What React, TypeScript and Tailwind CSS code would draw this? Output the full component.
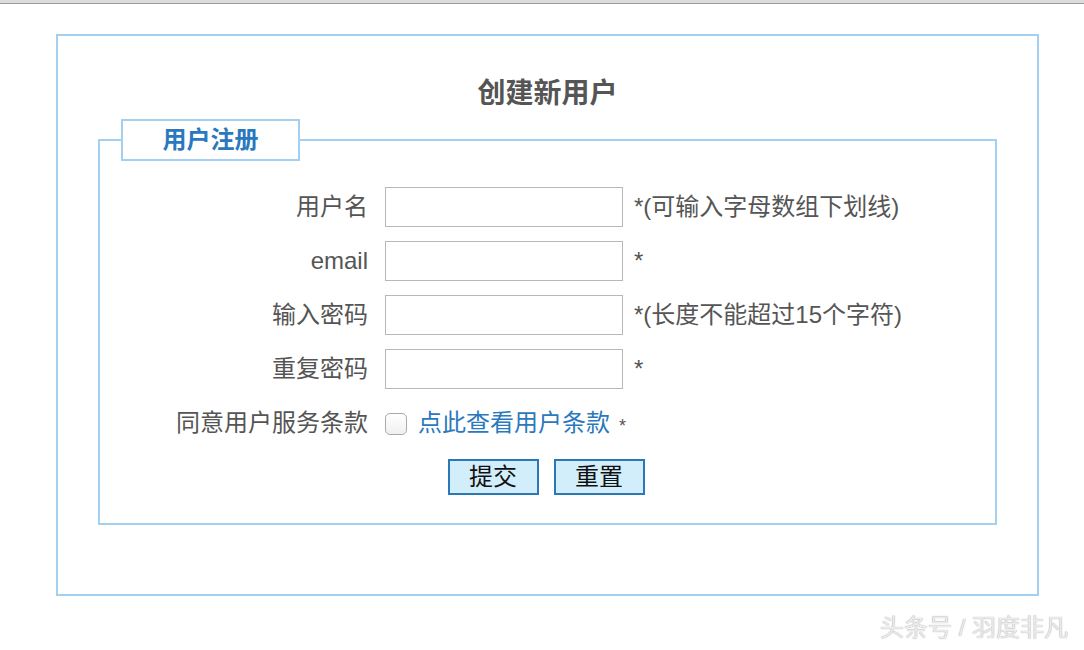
import React from 'react';

const FONT = "font-['Liberation_Sans','Noto_Sans_CJK_SC',sans-serif]";

const FIELDS = [
  { label: '用户名', type: 'text', hint: '*(可输入字母数组下划线)' },
  { label: 'email', type: 'text', hint: '*' },
  { label: '输入密码', type: 'password', hint: '*(长度不能超过15个字符)' },
  { label: '重复密码', type: 'password', hint: '*' },
];

function Row({ label, children }: { label: string; children: React.ReactNode }) {
  return (
    <div className="flex items-center h-[54px]">
      <div className="w-[268px] text-right text-[24px] leading-[30px] text-[#555]">{label}</div>
      <div className="ml-[17px] flex items-center">{children}</div>
    </div>
  );
}

export default function App() {
  return (
    <div className={`w-[1084px] h-[650px] bg-white overflow-hidden flex flex-col ${FONT}`}>
      <div className="h-[3px] bg-[#dcdcdc]" />
      <div className="h-px bg-[#9a9a9a]" />

      <div className="ml-[56px] mt-[30px] w-[983px] h-[562px] border-2 border-[#a3cff1] px-[40px]">
        <h2 className="pt-[38px] h-[83px] text-center text-[28px] leading-[40px] font-bold text-[#555]">
          创建新用户
        </h2>

        <fieldset className="border-2 border-[#a3cff1] p-0 m-0">
          <legend className="ml-[21px] w-[179px] h-[42px] border-2 border-[#a3cff1] text-left">
            <div className="text-center text-[24px] leading-[38px] font-bold text-[#2a78bd]">用户注册</div>
          </legend>

          <div className="pt-[19px] pb-[19px]">
            {FIELDS.map((f) => (
              <Row key={f.label} label={f.label}>
                <input
                  type={f.type}
                  className="w-[238px] h-[40px] border border-[#b8b8b8] bg-white outline-none"
                />
                <span className="ml-[11px] text-[24px] leading-[30px] text-[#555]">{f.hint}</span>
              </Row>
            ))}

            <Row label="同意用户服务条款">
              <span className="mt-[2px] w-[22px] h-[22px] rounded-[5px] border border-[#a9a9a9] bg-gradient-to-b from-white to-[#f0f0f0]" />
              <a className="ml-[11px] text-[24px] leading-[30px] text-[#2a78bd] cursor-pointer">点此查看用户条款</a>
              <span className="ml-[9px] mt-[6px] text-[18px] text-[#555]">*</span>
            </Row>

            <div className="flex items-center justify-center gap-[15px] h-[54px] pr-[3px]">
              <button className="w-[91px] h-[36px] border-2 border-[#2b78b6] bg-[#d3eefb] text-[24px] leading-[30px] text-[#111]">
                提交
              </button>
              <button className="w-[91px] h-[36px] border-2 border-[#2b78b6] bg-[#d3eefb] text-[24px] leading-[30px] text-[#111]">
                重置
              </button>
            </div>
          </div>
        </fieldset>
      </div>

      <div className="flex justify-end pr-[16px] mt-[17px]">
        <span className="text-[24px] leading-[30px] text-[#ececec] [text-shadow:0_0_1px_#8a8a8a]">
          头条号 / 羽度非凡
        </span>
      </div>
    </div>
  );
}
